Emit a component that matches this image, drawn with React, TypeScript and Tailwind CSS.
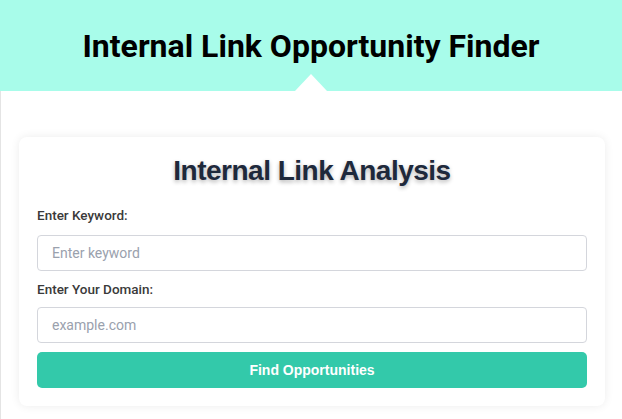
import React from "react";

const App = () => {
  return (
    <div className="min-h-[419px] bg-white font-['Roboto',sans-serif]">
      <header className="relative flex h-[91px] items-center justify-center bg-[#a8fcea]">
        <h1 className="text-[32px] font-bold leading-none text-black">
          Internal Link Opportunity Finder
        </h1>
        <div className="absolute bottom-0 left-1/2 h-0 w-0 -translate-x-1/2 border-x-[16px] border-b-[17px] border-x-transparent border-b-white" />
      </header>

      <main className="min-h-[328px] border-l border-[#e4e4e4] pt-[46px]">
        <div className="ml-[18px] mr-[17px] rounded-lg bg-white p-[18px] shadow-[0_0_10px_rgba(0,0,0,0.08)]">
          <h2 className="mb-[20px] text-center font-['Liberation_Sans',Arial,sans-serif] text-[28px] font-bold leading-[32px] tracking-[-0.5px] text-[#1e293b] [text-shadow:0_2px_4px_rgba(0,0,0,0.3)]">
            Internal Link Analysis
          </h2>

          <label className="mb-[12px] block text-[13.5px] font-medium leading-4 text-[#3a3a3a]">
            Enter Keyword:
          </label>
          <input
            type="text"
            placeholder="Enter keyword"
            className="block h-[36px] w-full rounded border border-[#d4d6dc] px-[14px] text-[14px] text-[#333] placeholder:text-[#9aa1ad] outline-none"
          />

          <label className="mb-[10px] mt-[10px] block text-[13.5px] font-medium leading-4 text-[#3a3a3a]">
            Enter Your Domain:
          </label>
          <input
            type="text"
            placeholder="example.com"
            className="block h-[36px] w-full rounded border border-[#d4d6dc] px-[14px] text-[14px] text-[#333] placeholder:text-[#9aa1ad] outline-none"
          />

          <button className="mt-[9px] block h-[36px] w-full rounded-[5px] bg-[#33c9aa] font-['Liberation_Sans',Arial,sans-serif] text-[14px] font-bold text-white">
            Find Opportunities
          </button>
        </div>
      </main>
    </div>
  );
};

export default App;
